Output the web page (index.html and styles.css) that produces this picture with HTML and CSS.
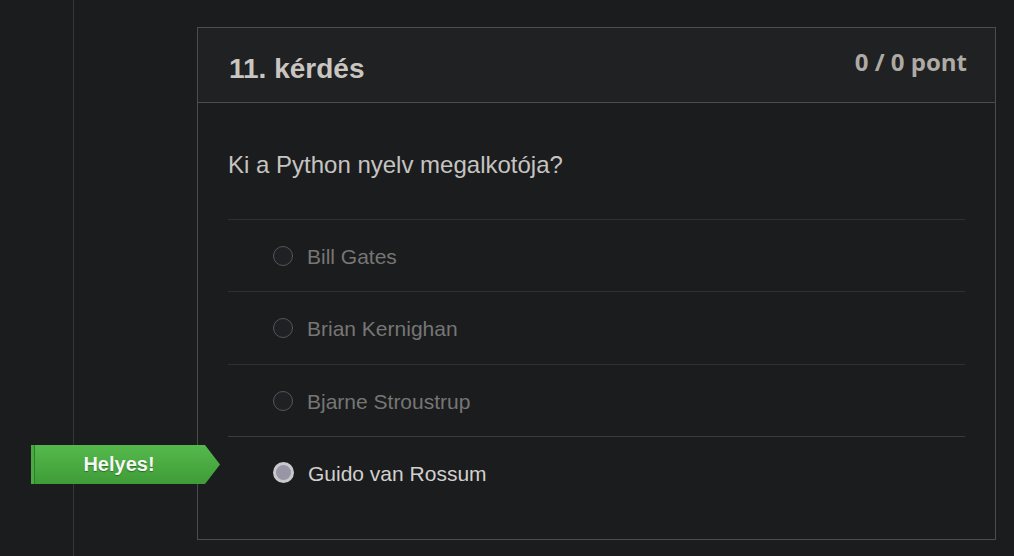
FILE: index.html
```html
<!DOCTYPE html>
<html lang="hu">
<head>
<meta charset="utf-8">
<title>11. kérdés</title>
<link rel="stylesheet" href="styles.css">
</head>
<body>
<div class="page">
  <div class="rail"></div>
  <main class="main">
    <section class="card">
      <header class="card-head">
        <h2 class="title">11. kérdés</h2>
        <div class="points">0 / 0 pont</div>
      </header>
      <div class="card-body">
        <p class="question">Ki a Python nyelv megalkotója?</p>
        <ul class="answers">
          <li class="answer"><span class="radio"></span><span class="label">Bill Gates</span></li>
          <li class="answer tall"><span class="radio"></span><span class="label">Brian Kernighan</span></li>
          <li class="answer"><span class="radio"></span><span class="label">Bjarne Stroustrup</span></li>
          <li class="answer selected">
            <span class="badge">Helyes!</span>
            <span class="radio"></span><span class="label">Guido van Rossum</span>
          </li>
        </ul>
      </div>
    </section>
  </main>
</div>
</body>
</html>
```

FILE: styles.css
```css
html, body {
  margin: 0;
  padding: 0;
  background: #1b1c1e;
  height: 100%;
  overflow: hidden;
}
body {
  font-family: "Liberation Sans", Arial, sans-serif;
}
.page {
  display: flex;
  min-height: 556px;
}
.rail {
  width: 73px;
  flex: none;
  border-right: 1px solid #36373a;
}
.main {
  flex: 1;
  padding: 27px 18px 0 123px;
}
.card {
  width: 797px;
  border: 1px solid #4b4c4e;
  background: #1b1c1e;
}
.card-head {
  height: 74px;
  background: #202123;
  border-bottom: 1px solid #4b4c4e;
  display: flex;
  justify-content: space-between;
  align-items: flex-start;
  padding: 0 28px 0 31px;
}
.title {
  margin: 0;
  padding-top: 25px;
  font-size: 28px;
  line-height: 32px;
  font-weight: bold;
  color: #c9c6c1;
}
.points {
  padding-top: 18px;
  font-family: "Open Sans", sans-serif;
  font-weight: 700;
  font-size: 24px;
  line-height: 32px;
  color: #aeaaa4;
}
.card-body {
  padding: 47px 30px 31px 30px;
}
.question {
  margin: 0 0 39px 0;
  font-size: 24px;
  line-height: 30px;
  color: #c6c4c1;
}
.answers {
  list-style: none;
  margin: 0;
  padding: 0;
}
.answer {
  position: relative;
  height: 72px;
  border-top: 1px solid #2f3033;
  display: flex;
  align-items: center;
  padding-left: 45px;
  box-sizing: border-box;
}
.answer.tall {
  height: 73px;
}
.answer.selected {
  border-top-color: #3a3b3d;
}
.radio {
  width: 18px;
  height: 18px;
  border: 1px solid #555659;
  border-radius: 50%;
  background: #202124;
  flex: none;
  margin-right: 14px;
}
.label {
  font-size: 21px;
  line-height: 26px;
  padding-top: 2px;
  color: #767674;
}
.selected .radio {
  width: 15px;
  height: 15px;
  border: 3px solid #c9c8cd;
  background: #9896a4;
}
.selected .label {
  color: #d2d0cc;
}
.badge {
  position: absolute;
  left: -197px;
  top: 8px;
  width: 189px;
  height: 39px;
  box-sizing: border-box;
  padding-right: 13px;
  display: flex;
  align-items: center;
  justify-content: center;
  background: linear-gradient(#55b94c, #3f9c38);
  clip-path: polygon(0 0, 174px 0, 100% 50%, 174px 100%, 0 100%);
  border-radius: 3px 0 0 3px;
  color: #f4f7f2;
  font-weight: bold;
  font-size: 20px;
  text-shadow: 0 1px 1px rgba(0,0,0,0.35);
}
.badge::before {
  content: "";
  position: absolute;
  left: 0;
  top: 0;
  bottom: 0;
  width: 3px;
  background: #4aaa42;
  border-right: 1px solid #2f7e2a;
}
```
